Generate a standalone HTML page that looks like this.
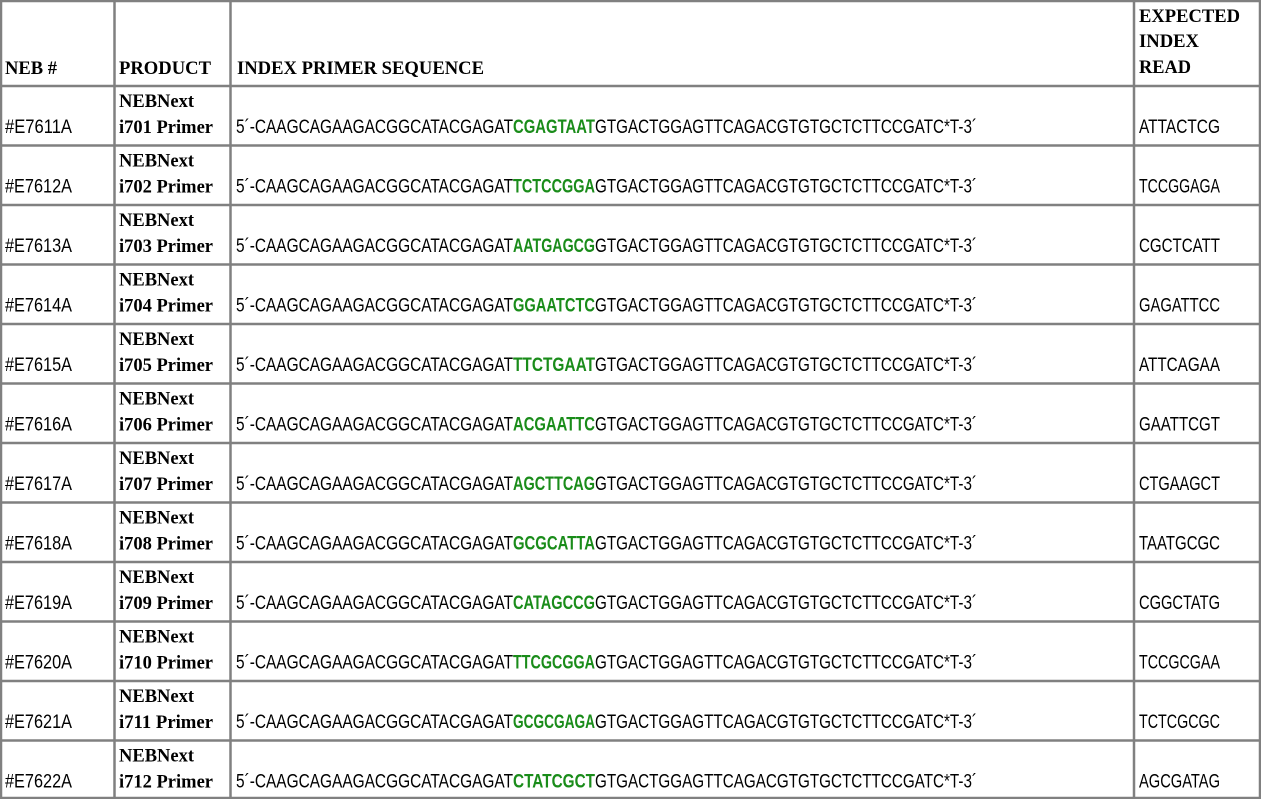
<!DOCTYPE html>
<html><head><meta charset="utf-8"><style>
html,body{margin:0;padding:0;background:#fff;}
svg{display:block}
.h{font-family:"Liberation Serif",serif;font-weight:bold;font-size:19px;fill:#000}
.s{font-family:"Liberation Sans Narrow","Liberation Sans",sans-serif;font-size:19px;fill:#000}
.g{font-family:"Liberation Sans Narrow","Liberation Sans",sans-serif;font-size:19px;font-weight:bold;fill:#1a8c1a}
</style></head><body>
<svg width="1261" height="799" xmlns="http://www.w3.org/2000/svg" id="t">
<g stroke="#808080" stroke-width="2.5">
<line x1="0" y1="1" x2="1261" y2="1"/>
<line x1="0" y1="86" x2="1261" y2="86"/>
<line x1="0" y1="145.5" x2="1261" y2="145.5"/>
<line x1="0" y1="205" x2="1261" y2="205"/>
<line x1="0" y1="264.5" x2="1261" y2="264.5"/>
<line x1="0" y1="324" x2="1261" y2="324"/>
<line x1="0" y1="383.5" x2="1261" y2="383.5"/>
<line x1="0" y1="443" x2="1261" y2="443"/>
<line x1="0" y1="502.5" x2="1261" y2="502.5"/>
<line x1="0" y1="562" x2="1261" y2="562"/>
<line x1="0" y1="621.5" x2="1261" y2="621.5"/>
<line x1="0" y1="681" x2="1261" y2="681"/>
<line x1="0" y1="740.5" x2="1261" y2="740.5"/>
<line x1="0" y1="798" x2="1261" y2="798"/>
<line x1="1" y1="0" x2="1" y2="799"/>
<line x1="114.5" y1="0" x2="114.5" y2="799"/>
<line x1="230.5" y1="0" x2="230.5" y2="799"/>
<line x1="1134" y1="0" x2="1134" y2="799"/>
<line x1="1260" y1="0" x2="1260" y2="799"/>
</g>
<text class="h" x="5" y="74" textLength="52" lengthAdjust="spacingAndGlyphs">NEB #</text>
<text class="h" x="119" y="74" textLength="92" lengthAdjust="spacingAndGlyphs">PRODUCT</text>
<text class="h" x="237" y="74" textLength="247" lengthAdjust="spacingAndGlyphs">INDEX PRIMER SEQUENCE</text>
<text class="h" x="1139" y="22" textLength="101" lengthAdjust="spacingAndGlyphs">EXPECTED</text>
<text class="h" x="1139" y="47" textLength="60" lengthAdjust="spacingAndGlyphs">INDEX</text>
<text class="h" x="1139" y="73" textLength="52" lengthAdjust="spacingAndGlyphs">READ</text>
<g id="rows"></g>
</svg>
<script>
var d=[["E7611A","701","CGAGTAAT","ATTACTCG"],["E7612A","702","TCTCCGGA","TCCGGAGA"],["E7613A","703","AATGAGCG","CGCTCATT"],["E7614A","704","GGAATCTC","GAGATTCC"],["E7615A","705","TTCTGAAT","ATTCAGAA"],["E7616A","706","ACGAATTC","GAATTCGT"],["E7617A","707","AGCTTCAG","CTGAAGCT"],["E7618A","708","GCGCATTA","TAATGCGC"],["E7619A","709","CATAGCCG","CGGCTATG"],["E7620A","710","TTCGCGGA","TCCGCGAA"],["E7621A","711","GCGCGAGA","TCTCGCGC"],["E7622A","712","CTATCGCT","AGCGATAG"]];
var h="";
d.forEach(function(r,i){
var t=86+i*59.5;var b=t+47;
h+='<text class="s" x="5" y="'+b+'" textLength="67" lengthAdjust="spacingAndGlyphs">#'+r[0]+'</text>';
h+='<text class="h" x="119" y="'+(t+21)+'" textLength="75" lengthAdjust="spacingAndGlyphs">NEBNext</text>';
h+='<text class="h" x="119" y="'+b+'" textLength="94" lengthAdjust="spacingAndGlyphs">i'+r[1]+' Primer</text>';
h+='<text class="s" x="236" y="'+b+'" textLength="277" lengthAdjust="spacingAndGlyphs">5\u00b4-CAAGCAGAAGACGGCATACGAGAT</text>';
h+='<text class="g" x="513" y="'+b+'" textLength="82" lengthAdjust="spacingAndGlyphs">'+r[2]+'</text>';
h+='<text class="s" x="595" y="'+b+'" textLength="382" lengthAdjust="spacingAndGlyphs">GTGACTGGAGTTCAGACGTGTGCTCTTCCGATC*T-3\u00b4</text>';
h+='<text class="s" x="1139" y="'+b+'" textLength="81" lengthAdjust="spacingAndGlyphs">'+r[3]+'</text>';
});
document.getElementById("rows").innerHTML=h;
</script>
</body></html>
